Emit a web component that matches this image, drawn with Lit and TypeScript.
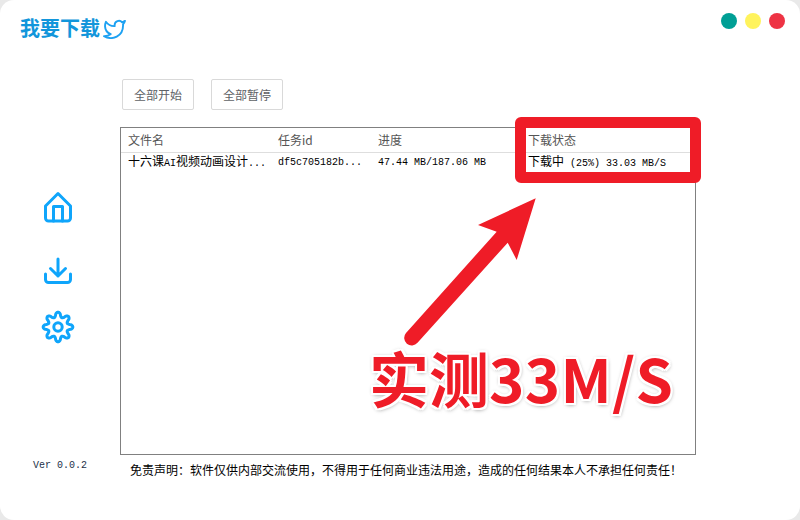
import { LitElement, html, css, svg } from "lit";
import { customElement } from "lit/decorators.js";

const gearPath = () => {
  const cx = 16, cy = 16, pts: string[] = [];
  for (let i = 0; i < 240; i++) {
    const t = (i / 240) * Math.PI * 2;
    const w = Math.cos(8 * t);
    const r = 12.4 + 2.4 * Math.sign(w) * Math.pow(Math.abs(w), 0.7);
    pts.push(`${(cx + r * Math.cos(t)).toFixed(2)} ${(cy + r * Math.sin(t)).toFixed(2)}`);
  }
  return "M" + pts.join("L") + "Z";
};

const NOTE = "免责声明\uFF1A软件仅供内部交流使用\uFF0C不得用于任何商业违法用途\uFF0C造成的任何结果本人不承担任何责任\uFF01";

@customElement("app-root")
export class AppRoot extends LitElement {
  static styles = css`
    :host { display: block; width: 800px; height: 520px; background: #e9e9e9; position: relative; overflow: hidden;
      font-family: "Noto Sans CJK SC", sans-serif; font-size: 12px; color: #000; }
    .window { width: 800px; height: 520px; background: #fff; border-radius: 14px; display: grid;
      grid-template-columns: 120px 1fr; grid-template-rows: 79px 1fr; }
    .head { grid-column: 1 / 3; display: flex; justify-content: space-between; align-items: flex-start; padding: 13px 15px 0 20px; }
    .brand { display: flex; align-items: center; gap: 3px; height: 30px; color: #1296db; font-size: 20px; font-weight: 700; line-height: 30px; }
    .brand svg { display: block; }
    .dots { display: flex; gap: 8px; }
    .dot { width: 16px; height: 16px; border-radius: 50%; }
    .teal { background: #009f95; } .yellow { background: #fff35c; } .red { background: #ee3344; }
    .side { display: flex; flex-direction: column; padding: 112px 0 47px 33px; }
    .side svg { display: block; margin-left: 9px; fill: none; stroke: #0fa5fb; stroke-width: 3; stroke-linecap: round; stroke-linejoin: round; overflow: visible; }
    .dl { margin-top: 32px; } .gear { margin-top: 24px; }
    .ver { margin-top: auto; line-height: 14px; color: #24324a; }
    .mono { font-family: "Liberation Mono", monospace; font-size: 10px; font-weight: 400; }
    .main { display: flex; flex-direction: column; }
    .tools { display: flex; gap: 17px; padding-left: 2px; height: 31px; }
    .btn { width: 72px; height: 31px; box-sizing: border-box; border: 1px solid #d9d9d9; border-radius: 2px; background: #fff;
      color: #606266; font: inherit; padding: 0; }
    .table { margin-top: 17px; width: 576px; height: 328px; box-sizing: border-box; border: 1px solid #808080; }
    .row { display: grid; grid-template-columns: 150px 100px 150px 1fr; padding-left: 7px; align-items: center; }
    .th { height: 22px; padding-bottom: 2px; border-bottom: 1px solid #dedede; color: #555; }
    .td { height: 16px; line-height: 16px; }
    .note { margin: 8px 0 0 10px; line-height: 14px; white-space: nowrap; }
    .box { position: absolute; left: 515px; top: 117px; width: 186px; height: 66px; box-sizing: border-box; border: 11px solid #ef1c27; border-radius: 6px; }
    .arrow { position: absolute; left: 0; top: 0; pointer-events: none; }
    .big { position: absolute; left: 369px; top: 337px; font-size: 60px; line-height: 80px; font-weight: 700; color: #ef1c27; white-space: nowrap;
      text-shadow: 2px 0 0 #fff, -2px 0 0 #fff, 0 2px 0 #fff, 0 -2px 0 #fff, 2px 2px 0 #fff, -2px 2px 0 #fff, 2px -2px 0 #fff, -2px -2px 0 #fff, 0 0 4px #999, 1px 2px 4px #aaa; }
    .wide { letter-spacing: 0.3px; }
  `;

  render() {
    return html`
      <div class="window">
        <div class="head">
          <div class="brand">我要下载
            <svg width="23" height="21" viewBox="0 0 24 22" fill="none" stroke="#1da1f2" stroke-width="2" stroke-linejoin="round">
              <path d="M23 3a10.9 10.9 0 0 1-3 1.53 4.48 4.48 0 0 0-7.86 3v1A10.66 10.66 0 0 1 3 4s-4 9 5 13a11.64 11.64 0 0 1-7 2c9 5 20 0 20-11.5a4.5 4.5 0 0 0-.08-.83A7.72 7.72 0 0 0 23 3z"/>
            </svg>
          </div>
          <div class="dots"><div class="dot teal"></div><div class="dot yellow"></div><div class="dot red"></div></div>
        </div>
        <div class="side">
          <svg width="32" height="32" viewBox="0 0 32 32">
            <path d="M3.5 15 16 2.5 28.5 15V27a3 3 0 0 1-3 3H6.5a3 3 0 0 1-3-3Z"/>
            <path d="M11.5 30V15.5h9V30"/>
          </svg>
          <svg class="dl" width="32" height="32" viewBox="0 0 32 32">
            <path d="M16 4v17M8.5 13.5 16 21l7.5-7.5"/>
            <path d="M3.5 19v5.5a3 3 0 0 0 3 3h19a3 3 0 0 0 3-3V19"/>
          </svg>
          <svg class="gear" width="32" height="32" viewBox="0 0 32 32">
            ${svg`<path d=${gearPath()}/><circle cx="16" cy="16" r="4.2"/>`}
          </svg>
          <div class="ver mono">Ver 0.0.2</div>
        </div>
        <div class="main">
          <div class="tools">
            <button class="btn">全部开始</button>
            <button class="btn">全部暂停</button>
          </div>
          <div class="table">
            <div class="row th"><span>文件名</span><span>任务id</span><span>进度</span><span>下载状态</span></div>
            <div class="row td">
              <span>十六课<span class="mono">AI</span>视频动画设计<span class="mono">...</span></span>
              <span class="mono">df5c705182b...</span>
              <span class="mono">47.44 MB/187.06 MB</span>
              <span>下载中<span class="mono"> (25%) 33.03 MB/S</span></span>
            </div>
          </div>
          <div class="note">${NOTE}</div>
        </div>
      </div>
      <div class="box"></div>
      <svg class="arrow" width="800" height="520" viewBox="0 0 800 520">
        <path d="M535.7 198.3 478 225 496.7 231.7 406 333a7.5 7.5 0 0 0 11.5 9.8L507.7 242.7 516.7 260Z" fill="#ef1c27"/>
      </svg>
      <div class="big">实测<span class="wide">33M/S</span></div>
    `;
  }
}
